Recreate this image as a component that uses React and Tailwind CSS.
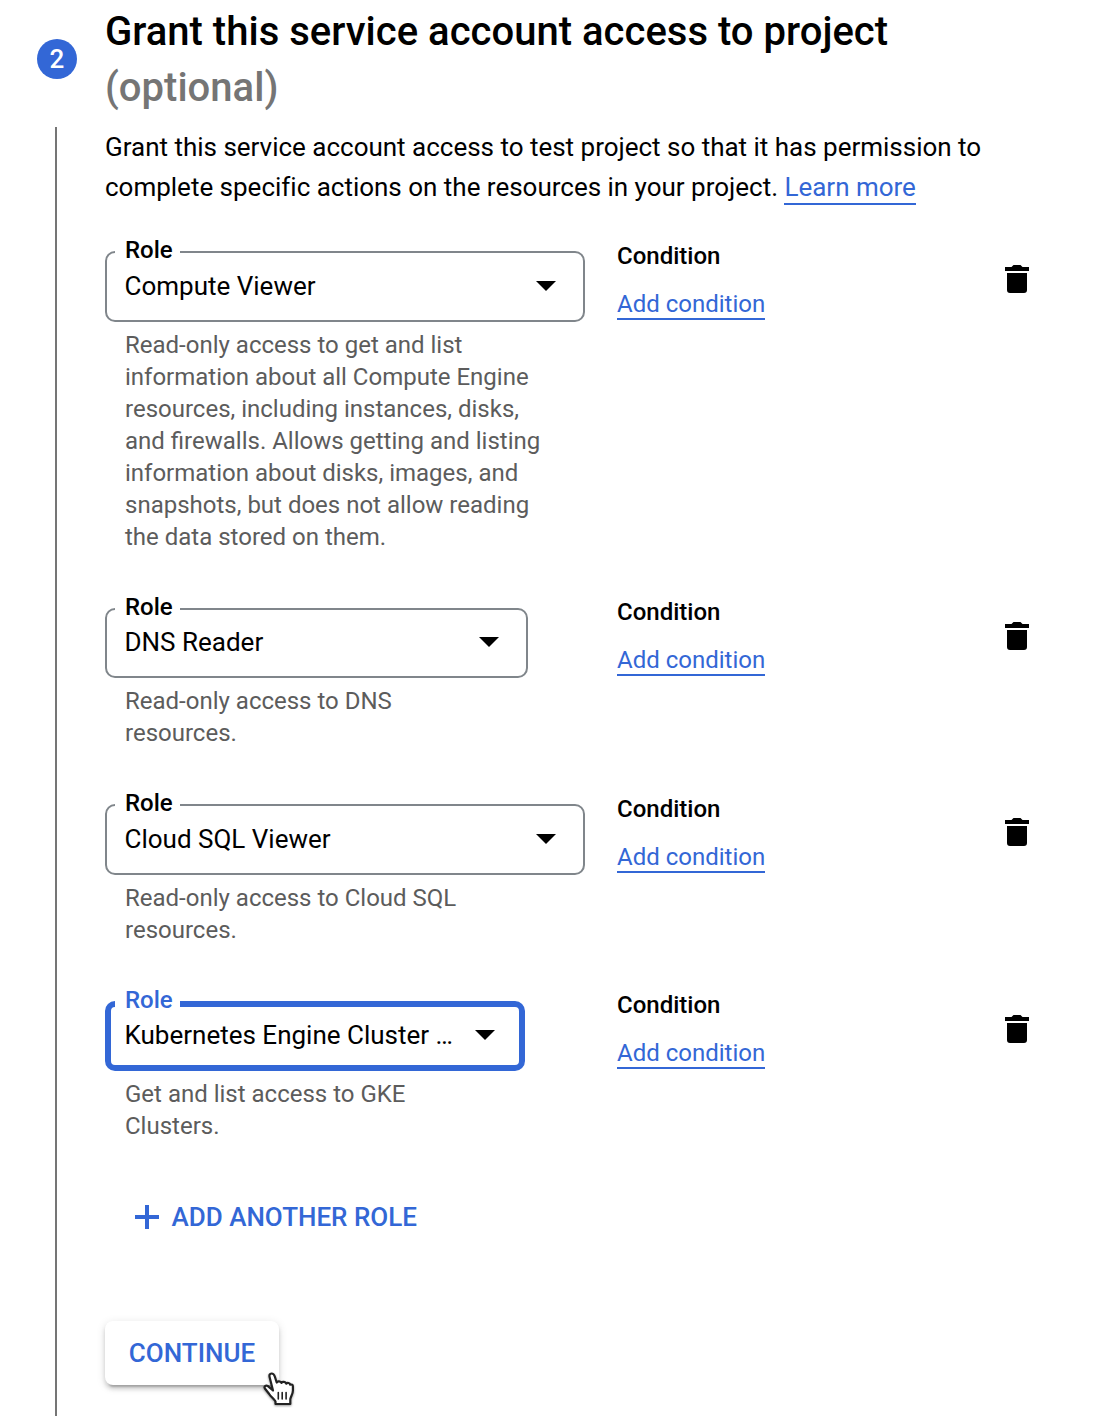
const roles = [
  {
    name: "Compute Viewer",
    hint: ["Read-only access to get and list", "information about all Compute Engine", "resources, including instances, disks,", "and firewalls. Allows getting and listing", "information about disks, images, and", "snapshots, but does not allow reading", "the data stored on them."],
    row: "h-[357px]",
    box: "w-[480px] h-[71px]",
    value: "left-[17.5px] top-[18px]",
    arrow: "right-[27px] top-[28px]",
    condition: "-mt-[9px]",
  },
  {
    name: "DNS Reader",
    hint: ["Read-only access to DNS", "resources."],
    row: "h-[196px]",
    box: "w-[423px] h-[70px]",
    value: "left-[17.5px] top-[17px]",
    arrow: "right-[27px] top-[27px]",
    condition: "-mt-[10px]",
  },
  {
    name: "Cloud SQL Viewer",
    hint: ["Read-only access to Cloud SQL", "resources."],
    row: "h-[197px]",
    box: "w-[480px] h-[71px]",
    value: "left-[17.5px] top-[18px]",
    arrow: "right-[27px] top-[28px]",
    condition: "-mt-[9px]",
  },
  {
    name: "Kubernetes Engine Cluster …",
    hint: ["Get and list access to GKE", "Clusters."],
    row: "h-[196px]",
    box: "w-[420px] h-[70px]",
    value: "left-[13.5px] top-[13px]",
    arrow: "right-[24px] top-[23px]",
    condition: "-mt-[10px]",
    focused: true,
  },
];

function TrashIcon() {
  return (
    <svg className="mt-[14px] h-7 w-6" viewBox="0 0 24 28" fill="#000">
      <path d="M0 2h6.500l2-2h7l2 2H24v4H0zM2 8h20v17a3 3 0 0 1-3 3H5a3 3 0 0 1-3-3z" />
    </svg>
  );
}

function HandCursor() {
  return (
    <svg className="absolute top-[49px] left-[155px] h-9 w-9 drop-shadow-[0_1px_1px_rgba(0,0,0,0.4)]" viewBox="0 0 36 36" fill="none" stroke="#222" strokeWidth="2.2" strokeLinejoin="round" strokeLinecap="round">
      <path fill="#fff" d="M13 20.500 9.700 7.500C9 5 9.800 3.500 11.500 3.500s2.700 1 3.300 3l1.900 6c.8-1.800 4-1.500 4.700.4 1-1.500 4-1.300 4.800.8 1.100-1.300 3.500-.9 4 1 1.500-.6 2.700.2 2.700 1.800v4c0 3.500-1.900 5.500-2.600 8.500v5H15.500V31.500c-1.500-2.800-4.500-4.500-6.500-7.800L4.900 18.500c-1.200-1.800.8-3.500 3-2.400z" />
      <path d="M18.300 22.500v6.500M22.200 22.500v6.500M26.100 22.500v6.500" strokeWidth="1.600" />
    </svg>
  );
}

function RoleSelect({ role }) {
  return (
    <div className={`relative rounded-[10px] ${role.box} ${role.focused ? "border-[6px] border-[#3367d6]" : "border-2 border-[#80868b]"}`}>
      <span className={`absolute flex h-7 w-[65px] items-center bg-white pl-[10px] text-2xl font-medium ${role.focused ? "-top-[21px] left-1 text-[#3367d6]" : "-top-[17px] left-2"}`}>
        Role
      </span>
      <span className={`absolute text-[26px] leading-[30px] whitespace-nowrap ${role.value}`}>{role.name}</span>
      <svg className={`absolute h-[10px] w-5 ${role.arrow}`} viewBox="0 0 20 10">
        <path d="M0 0h20L10 10z" />
      </svg>
    </div>
  );
}

function RoleRow({ role }) {
  return (
    <div className={`grid grid-cols-[512px_388px_24px] ${role.row}`}>
      <div>
        <RoleSelect role={role} />
        <div className="mt-[7px] pl-5 text-2xl leading-8 whitespace-nowrap text-[#5c5c5c]">
          {role.hint.map((line) => <p key={line}>{line}</p>)}
        </div>
      </div>
      <div className="flex flex-col items-start text-2xl">
        <h3 className={`leading-7 font-medium ${role.condition}`}>Condition</h3>
        <a className="mt-[19px] h-[31px] border-b-2 border-[#3367d6] leading-[30px] text-[#3367d6]">Add condition</a>
      </div>
      <TrashIcon />
    </div>
  );
}

export default function App() {
  return (
    <main className="flex h-[1416px] w-[1103px] overflow-hidden bg-white font-['Roboto',sans-serif] text-black">
      <aside className="flex w-[105px] shrink-0 flex-col pt-[39px] pl-[37px]">
        <div className="flex size-10 items-center justify-center rounded-full bg-[#3367d6] text-[26px] font-medium text-white">2</div>
        <div className="mt-12 ml-[18px] w-0.5 flex-1 bg-[#757575]" />
      </aside>
      <section className="w-[924px] shrink-0">
        <h2 className="pt-1 text-[40px] leading-[56px] font-medium tracking-[0.015px] whitespace-nowrap">
          Grant this service account access to project<br />
          <span className="text-[#757575]">(optional)</span>
        </h2>
        <p className="mt-[11px] h-[124px] text-[26px] leading-10 tracking-[-0.01px] whitespace-nowrap">
          Grant this service account access to test project so that it has permission to<br />
          complete specific actions on the resources in your project.{" "}
          <a className="inline-block h-[35px] border-b-2 border-[#3367d6] leading-[34px] text-[#3367d6]">Learn more</a>
        </p>
        {roles.map((role) => <RoleRow key={role.name} role={role} />)}
        <button className="flex h-10 items-center pl-[30px] text-[26px] font-medium whitespace-nowrap text-[#3367d6]">
          <svg className="mr-[12.5px] size-6" viewBox="0 0 24 24" fill="#3367d6">
            <path d="M10 0h4v10h10v4H14v10h-4V14H0v-4h10z" />
          </svg>
          ADD ANOTHER ROLE
        </button>
        <div className="relative mt-[84px] w-[174px]">
          <button className="h-16 w-full rounded-lg bg-white text-[26px] font-medium text-[#3367d6] shadow-[0_6px_2px_-4px_rgba(0,0,0,0.2),0_4px_4px_rgba(0,0,0,0.14),0_2px_10px_rgba(0,0,0,0.12)]">
            CONTINUE
          </button>
          <HandCursor />
        </div>
      </section>
    </main>
  );
}
